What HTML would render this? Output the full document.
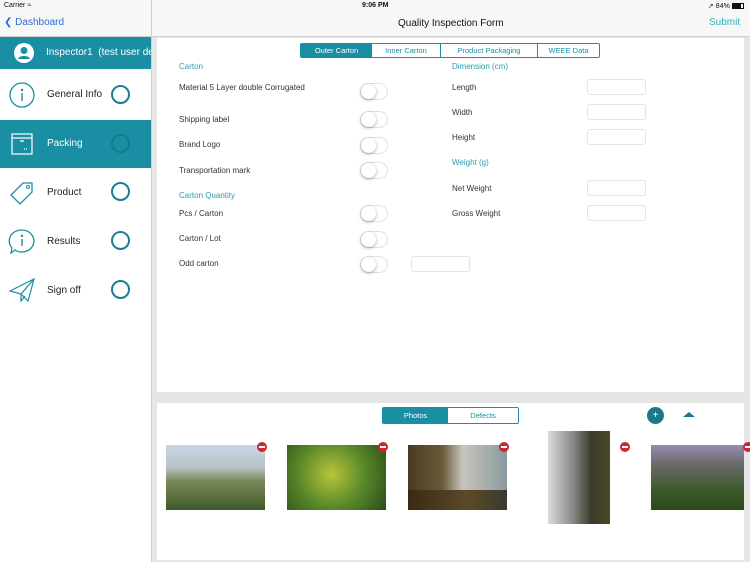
<!DOCTYPE html>
<html><head><style>
*{margin:0;padding:0;box-sizing:border-box}
body{width:750px;height:562px;overflow:hidden;font-family:"Liberation Sans",sans-serif;background:#e6e6e6;position:relative}
.a{position:absolute}
.lbl{position:absolute;font-size:8px;color:#333}
.sec{position:absolute;font-size:8px;color:#2a9bb0}
.tg{position:absolute;width:28px;height:17px;border-radius:9px;border:1px solid #e2e2e2;background:#fff}
.tg:after{content:"";position:absolute;left:0;top:0;width:15px;height:15px;border-radius:50%;background:#fff;box-shadow:0 1px 3px rgba(0,0,0,.35)}
.in{position:absolute;width:59px;height:16px;border:1px solid #e4e4e4;border-radius:3px;background:#fff}
.row{position:absolute;left:0;width:151px;height:49px}
.row span{position:absolute;left:47px;font-size:10px;color:#222}
.ring{position:absolute;left:111px;width:19px;height:19px;border:2px solid #1a7d91;border-radius:50%}
.ph{position:absolute}
.rm{position:absolute;width:10px;height:10px;border-radius:50%;background:#c8282e}
.rm:after{content:"";position:absolute;left:2px;top:4px;width:6px;height:2px;background:#fff}
</style></head><body>
<div class="a" style="left:0;top:0;width:750px;height:37px;background:#f7f7f7;border-bottom:1px solid #d0d0d0"></div>
<div class="a" style="left:151px;top:0;width:1px;height:562px;background:#cfcfcf"></div>
<div class="a" style="left:4px;top:2px;font-size:7px;color:#111">Carrier ︎≈</div>
<div class="a" style="left:362px;top:2px;font-size:7px;font-weight:bold;color:#111">9:06 PM</div>
<div class="a" style="left:708px;top:2px;font-size:7px;color:#111">➚ 84% <span style="display:inline-block;width:12px;height:6px;border:1px solid #111;vertical-align:middle;background:linear-gradient(90deg,#111 80%,#fff 80%)"></span></div>
<div class="a" style="left:4px;top:17px;font-size:10px;color:#2a6fd6">&#10094; Dashboard</div>
<div class="a" style="left:398px;top:18px;font-size:10px;color:#111">Quality Inspection Form</div>
<div class="a" style="left:709px;top:17px;font-size:10px;color:#30b3b8">Submit</div>
<div class="a" style="left:0;top:37px;width:151px;height:525px;background:#fff"></div>
<div class="a" style="left:0;top:37px;width:151px;height:32px;background:#1a8ea3"></div>
<svg class="a" style="left:14px;top:43px" width="20" height="20" viewBox="0 0 20 20"><circle cx="10" cy="10" r="10" fill="#fff"/><circle cx="10" cy="7.5" r="3.5" fill="#1a8ea3"/><path d="M4 16c1-4 11-4 12 0" fill="#1a8ea3"/></svg>
<div class="a" style="left:46px;top:47px;font-size:10px;color:#fff;white-space:nowrap;width:105px;overflow:hidden">Inspector1 &nbsp;(test user dev</div>
<div class="row" style="top:69px"><svg class="a" style="left:9px;top:13px" width="26" height="26"><circle cx="13" cy="13" r="12" fill="none" stroke="#1a8ea3" stroke-width="1.3"/><circle cx="13" cy="8" r="1.2" fill="#1a8ea3"/><path d="M13 11v8" stroke="#1a8ea3" stroke-width="1.4"/></svg><span style="top:20px">General Info</span><div class="ring" style="top:16px"></div></div>
<div class="row" style="top:120px;height:48px;background:#1a8ea3"><svg class="a" style="left:11px;top:13px" width="22" height="22"><rect x="1" y="1" width="20" height="20" fill="none" stroke="#fff" stroke-width="1.2"/><path d="M1 5h20M9 8h4M13 16h1M15 16h1" stroke="#fff" stroke-width="1.2"/></svg><span style="top:18px;color:#fff">Packing</span><div class="ring" style="top:14px;border-color:#17798c"></div></div>
<div class="row" style="top:168px"><svg class="a" style="left:8px;top:12px" width="28" height="26"><path d="M3 15L15 3h9v9L12 24z" fill="none" stroke="#1a8ea3" stroke-width="1.3"/><circle cx="20" cy="7" r="1.5" fill="none" stroke="#1a8ea3"/></svg><span style="top:19px">Product</span><div class="ring" style="top:14px"></div></div>
<div class="row" style="top:217px"><svg class="a" style="left:8px;top:11px" width="28" height="28"><path d="M14 2a12 11 0 1 1-7 20l-4 3 1-5A12 11 0 0 1 14 2z" fill="none" stroke="#1a8ea3" stroke-width="1.3"/><circle cx="14" cy="8" r="1.2" fill="#1a8ea3"/><path d="M14 11v7" stroke="#1a8ea3" stroke-width="1.4"/></svg><span style="top:19px">Results</span><div class="ring" style="top:14px"></div></div>
<div class="row" style="top:266px"><svg class="a" style="left:8px;top:11px" width="28" height="26"><path d="M2 14L26 2 20 24 13 17 2 14zM26 2L13 17v7l4-5" fill="none" stroke="#1a8ea3" stroke-width="1.2"/></svg><span style="top:19px">Sign off</span><div class="ring" style="top:14px"></div></div>
<div class="a" style="left:157px;top:38px;width:587px;height:354px;background:#fff"></div>
<div class="a" style="left:300px;top:43px;width:300px;height:15px;border:1px solid #1a8ea3;border-radius:2px;display:flex;font-size:7.5px;color:#1a8ea3;background:#fff">
<div style="width:71px;background:#1a8ea3;color:#fff;text-align:center;line-height:13px">Outer Carton</div>
<div style="width:69px;border-right:1px solid #1a8ea3;text-align:center;line-height:13px">Inner Carton</div>
<div style="width:97px;border-right:1px solid #1a8ea3;text-align:center;line-height:13px">Product Packaging</div>
<div style="flex:1;text-align:center;line-height:13px">WEEE Data</div></div>
<div class="sec" style="left:179px;top:62px">Carton</div>
<div class="lbl" style="left:179px;top:83px">Material 5 Layer double Corrugated</div>
<div class="lbl" style="left:179px;top:115px">Shipping label</div>
<div class="lbl" style="left:179px;top:140px">Brand Logo</div>
<div class="lbl" style="left:179px;top:166px">Transportation mark</div>
<div class="sec" style="left:179px;top:191px">Carton Quantity</div>
<div class="lbl" style="left:179px;top:209px">Pcs / Carton</div>
<div class="lbl" style="left:179px;top:234px">Carton / Lot</div>
<div class="lbl" style="left:179px;top:259px">Odd carton</div>
<div class="tg" style="left:360px;top:83px"></div>
<div class="tg" style="left:360px;top:111px"></div>
<div class="tg" style="left:360px;top:137px"></div>
<div class="tg" style="left:360px;top:162px"></div>
<div class="tg" style="left:360px;top:205px"></div>
<div class="tg" style="left:360px;top:231px"></div>
<div class="tg" style="left:360px;top:256px"></div>
<div class="in" style="left:411px;top:256px"></div>
<div class="sec" style="left:452px;top:62px">Dimension (cm)</div>
<div class="lbl" style="left:452px;top:83px">Length</div>
<div class="lbl" style="left:452px;top:108px">Width</div>
<div class="lbl" style="left:452px;top:133px">Height</div>
<div class="sec" style="left:452px;top:158px">Weight (g)</div>
<div class="lbl" style="left:452px;top:184px">Net Weight</div>
<div class="lbl" style="left:452px;top:209px">Gross Weight</div>
<div class="in" style="left:587px;top:79px"></div>
<div class="in" style="left:587px;top:104px"></div>
<div class="in" style="left:587px;top:129px"></div>
<div class="in" style="left:587px;top:180px"></div>
<div class="in" style="left:587px;top:205px"></div>
<div class="a" style="left:157px;top:403px;width:587px;height:157px;background:#fff"></div>
<div class="a" style="left:382px;top:407px;width:137px;height:17px;border:1px solid #1a8ea3;border-radius:2px;display:flex;font-size:7.5px;color:#1a8ea3">
<div style="width:65px;background:#1a8ea3;color:#fff;text-align:center;line-height:15px">Photos</div><div style="flex:1;text-align:center;line-height:15px">Defects</div></div>
<div class="a" style="left:647px;top:407px;width:17px;height:17px;border-radius:50%;background:#17798c;color:#fff;font-size:10px;text-align:center;line-height:17px">+</div>
<div class="a" style="left:683px;top:412px;width:0;height:0;border-left:6px solid transparent;border-right:6px solid transparent;border-bottom:5px solid #17798c"></div>
<div class="ph" style="left:166px;top:445px;width:99px;height:65px;background:linear-gradient(180deg,#c9d6e6 0%,#b8c2c6 35%,#7a8a5a 55%,#3d5a2a 100%)"></div>
<div class="ph" style="left:287px;top:445px;width:99px;height:65px;background:radial-gradient(circle at 45% 45%,#b9c43a,#5a8a2a 50%,#2d4a18)"></div>
<div class="ph" style="left:408px;top:445px;width:99px;height:65px;background:linear-gradient(90deg,#4a3a22 0%,#6a5a3a 35%,#c8c4bc 55%,#8a9aa0 100%)"></div>
<div class="ph" style="left:408px;top:490px;width:99px;height:20px;background:linear-gradient(90deg,#3a2a14,#5a4a28 60%,#3a3a30)"></div>
<div class="ph" style="left:548px;top:431px;width:62px;height:93px;background:linear-gradient(90deg,#d8dcdc 0%,#8a8a88 40%,#3a3a2a 70%,#4a4a2a 100%)"></div>
<div class="ph" style="left:651px;top:445px;width:93px;height:65px;background:linear-gradient(180deg,#9a8ab0 0%,#6a6a6a 30%,#3a5a2a 70%,#2a4a1a 100%)"></div>
<div class="rm" style="left:257px;top:442px"></div>
<div class="rm" style="left:378px;top:442px"></div>
<div class="rm" style="left:499px;top:442px"></div>
<div class="rm" style="left:620px;top:442px"></div>
<div class="rm" style="left:743px;top:442px"></div>
</body></html>
